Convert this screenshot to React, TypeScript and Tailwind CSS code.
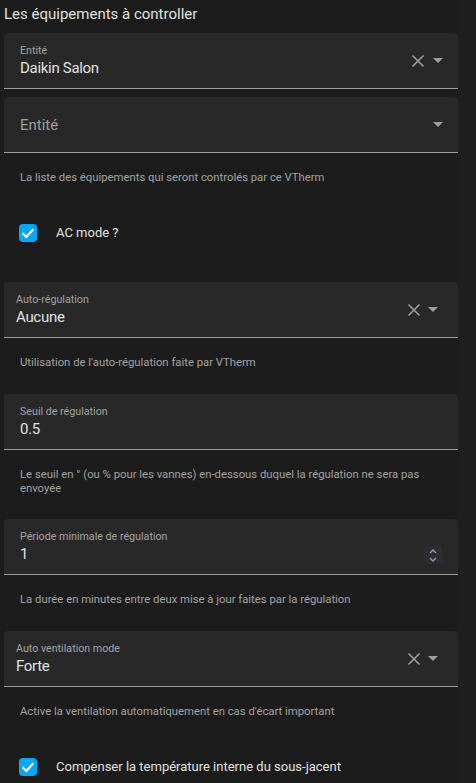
import React from 'react';

type FieldProps = {
  label?: string;
  value?: string;
  placeholder?: string;
  kind?: 'combo' | 'select' | 'number' | 'text';
  clearable?: boolean;
};

function CloseIcon() {
  return (
    <svg width="14" height="14" viewBox="0 0 14 14" className="text-[#9e9e9e]">
      <path d="M1.5 1.5 L12.5 12.5 M12.5 1.5 L1.5 12.5" stroke="currentColor" strokeWidth="1.6" fill="none" />
    </svg>
  );
}

function MenuDown() {
  return (
    <svg width="10" height="5" viewBox="0 0 10 5" className="text-[#9e9e9e]">
      <path d="M0 0 L10 0 L5 5 Z" fill="currentColor" />
    </svg>
  );
}

function Spinner() {
  return (
    <div className="w-[18px] h-[18px] rounded-sm bg-[#2e2d37] flex flex-col items-center justify-center gap-[3px]">
      <svg width="8" height="5" viewBox="0 0 8 5">
        <path d="M1 4 L4 1 L7 4" stroke="#9a9a9a" strokeWidth="1.4" fill="none" />
      </svg>
      <svg width="8" height="5" viewBox="0 0 8 5">
        <path d="M1 1 L4 4 L7 1" stroke="#9a9a9a" strokeWidth="1.4" fill="none" />
      </svg>
    </div>
  );
}

function Field({ label, value, placeholder, kind = 'combo', clearable }: FieldProps) {
  const isSelect = kind === 'select';
  return (
    <div className="h-14 bg-[#282828] rounded-t border-b border-[#9e9e9e] flex items-center">
      <div className={`flex-1 ${isSelect ? 'pl-3' : 'pl-4'}`}>
        {placeholder ? (
          <div className="text-[15px] leading-5 text-[#9e9e9e]">{placeholder}</div>
        ) : (
          <div>
            <div className="text-[10.7px] leading-[15px] text-[#a3a3a3]">{label}</div>
            <div className="text-[15px] leading-5 tracking-[-0.3px] text-[#e1e1e1]">{value}</div>
          </div>
        )}
      </div>
      {kind === 'number' && (
        <div className="pr-4 pt-[17px]">
          <Spinner />
        </div>
      )}
      {(kind === 'combo' || kind === 'select') && (
        <div className={`flex items-center ${isSelect ? 'pr-5' : 'pr-[15px]'}`}>
          {clearable && (
            <div className={isSelect ? 'mr-[7px]' : 'mr-[8px]'}>
              <CloseIcon />
            </div>
          )}
          <MenuDown />
        </div>
      )}
    </div>
  );
}

function Helper({ children }: { children: React.ReactNode }) {
  return (
    <p className="pl-4 pr-4 pt-[18px] text-[11.3px] leading-[14px] text-[#a3a3a3]">{children}</p>
  );
}

function Check({ label }: { label: string }) {
  return (
    <div className="h-10 flex items-center">
      <div className="ml-[15px] w-[18px] h-[18px] rounded-sm bg-[#03a9f4] flex items-center justify-center">
        <svg width="16" height="16" viewBox="0 0 24 24">
          <path d="M4 12.5 L9.5 18 L20 6.5" stroke="#fff" strokeWidth="3.2" fill="none" />
        </svg>
      </div>
      <span className="ml-[19px] text-[13px] text-[#e1e1e1]">{label}</span>
    </div>
  );
}

export default function App() {
  return (
    <div className="min-h-screen bg-[#1c1c1c] flex font-['Roboto','Liberation_Sans',sans-serif]">
      <div className="w-[458px] pl-1">
        <h2 className="pt-1 text-[15px] leading-5 text-[#e1e1e1]">Les équipements à controller</h2>

        <div className="mt-[9px]">
          <Field label="Entité" value="Daikin Salon" clearable />
        </div>
        <div className="mt-2">
          <Field placeholder="Entité" />
        </div>
        <Helper>La liste des équipements qui seront controlés par ce VTherm</Helper>

        <div className="mt-[28px]">
          <Check label="AC mode ?" />
        </div>

        <div className="mt-[29px]">
          <Field kind="select" label="Auto-régulation" value="Aucune" clearable />
        </div>
        <Helper>Utilisation de l'auto-régulation faite par VTherm</Helper>

        <div className="mt-[24px]">
          <Field kind="text" label="Seuil de régulation" value="0.5" />
        </div>
        <Helper>Le seuil en ° (ou % pour les vannes) en-dessous duquel la régulation ne sera pas envoyée</Helper>

        <div className="mt-[23px]">
          <Field kind="number" label="Période minimale de régulation" value="1" />
        </div>
        <Helper>La durée en minutes entre deux mise à jour faites par la régulation</Helper>

        <div className="mt-[24px]">
          <Field kind="select" label="Auto ventilation mode" value="Forte" clearable />
        </div>
        <Helper>Active la ventilation automatiquement en cas d'écart important</Helper>

        <div className="mt-[28px]">
          <Check label="Compenser la température interne du sous-jacent" />
        </div>
      </div>
      <div className="flex-1 bg-[#1f1f1f]" />
    </div>
  );
}
